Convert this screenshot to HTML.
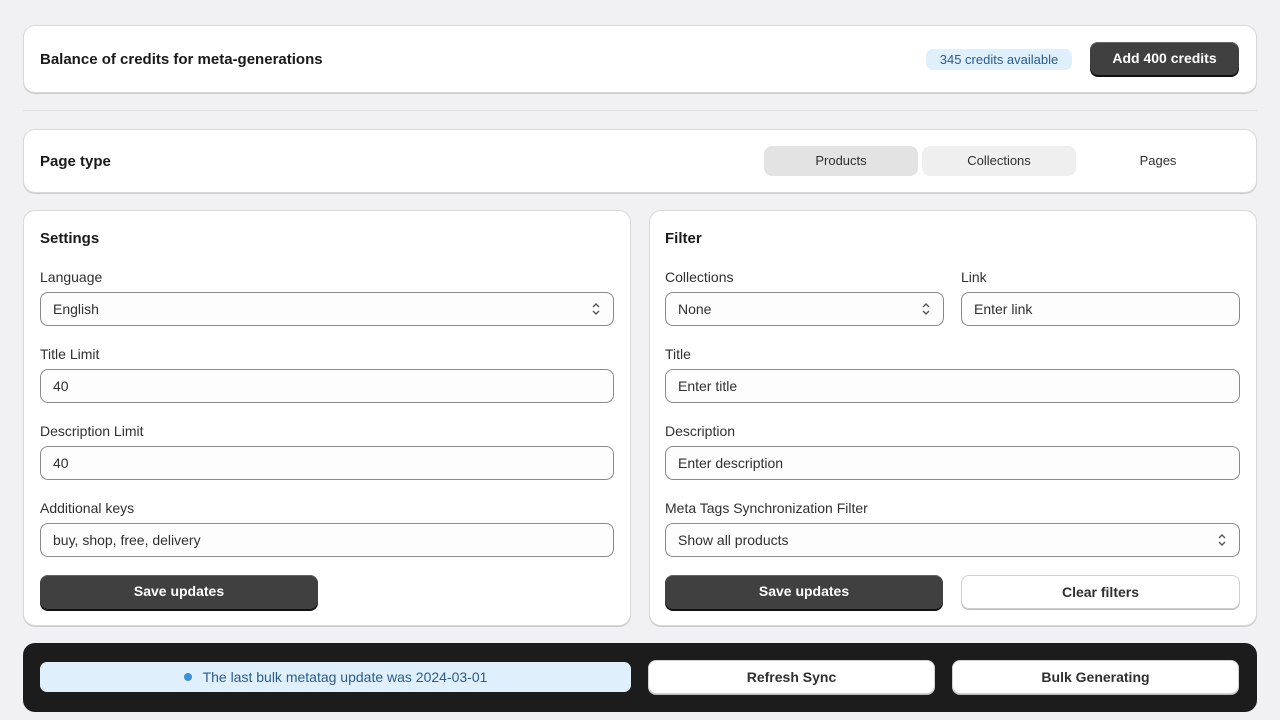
<!DOCTYPE html><html><head><style>
*{box-sizing:border-box;margin:0;padding:0}
body{width:1280px;height:720px;background:#f1f1f3;font-family:"Liberation Sans",sans-serif;color:#303030;position:relative;overflow:hidden}
.a{position:absolute}
.card{position:absolute;background:#fff;border:1px solid #d8d8d8;border-radius:12px;box-shadow:0 1px 0 #ccc}
.h{position:absolute;font-weight:bold;font-size:15px;color:#1a1a1a}
.lbl{position:absolute;font-size:14px;color:#303030}
.inp{position:absolute;height:34px;border:1px solid #8a8a8a;border-radius:8px;background:#fdfdfd;font-size:14px;line-height:32px;padding-left:12px;color:#303030}
.dark{position:absolute;height:34px;background:#404040;border-radius:8px;color:#fff;font-weight:bold;font-size:14px;text-align:center;line-height:33px;box-shadow:0 2px 0 #111,inset 0 1px 0 #666}
.wb{position:absolute;background:#fff;border:1px solid #d0d0d0;border-radius:8px;text-align:center;font-size:14px;font-weight:bold;color:#303030;box-shadow:0 1px 0 #bbb}
.tab{position:absolute;top:146px;height:30px;width:154px;border-radius:8px;text-align:center;line-height:30px;font-size:13px;color:#303030}
.chev{position:absolute;right:12px;top:9px}
</style></head><body>
<div class="card" style="left:23px;top:25px;width:1234px;height:68px"></div>
<div class="h" style="left:40px;top:51px">Balance of credits for meta-generations</div>
<div class="a" style="left:926px;top:49px;width:146px;height:21px;background:#e0effc;border-radius:7px;color:#2c5c8a;font-size:13px;text-align:center;line-height:21px">345 credits available</div>
<div class="dark" style="left:1090px;top:42px;width:149px;height:33px;font-size:14px">Add 400 credits</div>
<div class="a" style="left:23px;top:110px;width:1234px;height:1px;background:#e0e0e0"></div>
<div class="card" style="left:23px;top:129px;width:1234px;height:64px"></div>
<div class="h" style="left:40px;top:153px">Page type</div>
<div class="tab" style="left:764px;background:#e3e3e3">Products</div>
<div class="tab" style="left:922px;background:#efefef">Collections</div>
<div class="tab" style="left:1081px">Pages</div>

<div class="card" style="left:23px;top:210px;width:608px;height:416px"></div>
<div class="h" style="left:40px;top:230px">Settings</div>
<div class="lbl" style="left:40px;top:269px">Language</div>
<div class="inp" style="left:40px;top:292px;width:574px">English<svg class="chev" width="10" height="14" viewBox="0 0 10 14"><path d="M2 5l3-3 3 3M2 9l3 3 3-3" fill="none" stroke="#555" stroke-width="1.4"/></svg></div>
<div class="lbl" style="left:40px;top:346px">Title Limit</div>
<div class="inp" style="left:40px;top:369px;width:574px">40</div>
<div class="lbl" style="left:40px;top:423px">Description Limit</div>
<div class="inp" style="left:40px;top:446px;width:574px">40</div>
<div class="lbl" style="left:40px;top:500px">Additional keys</div>
<div class="inp" style="left:40px;top:523px;width:574px">buy, shop, free, delivery</div>
<div class="dark" style="left:40px;top:575px;width:278px">Save updates</div>

<div class="card" style="left:649px;top:210px;width:608px;height:416px"></div>
<div class="h" style="left:665px;top:230px">Filter</div>
<div class="lbl" style="left:665px;top:269px">Collections</div>
<div class="inp" style="left:665px;top:292px;width:279px">None<svg class="chev" width="10" height="14" viewBox="0 0 10 14"><path d="M2 5l3-3 3 3M2 9l3 3 3-3" fill="none" stroke="#555" stroke-width="1.4"/></svg></div>
<div class="lbl" style="left:961px;top:269px">Link</div>
<div class="inp" style="left:961px;top:292px;width:279px">Enter link</div>
<div class="lbl" style="left:665px;top:346px">Title</div>
<div class="inp" style="left:665px;top:369px;width:575px">Enter title</div>
<div class="lbl" style="left:665px;top:423px">Description</div>
<div class="inp" style="left:665px;top:446px;width:575px">Enter description</div>
<div class="lbl" style="left:665px;top:500px">Meta Tags Synchronization Filter</div>
<div class="inp" style="left:665px;top:523px;width:575px">Show all products<svg class="chev" width="10" height="14" viewBox="0 0 10 14"><path d="M2 5l3-3 3 3M2 9l3 3 3-3" fill="none" stroke="#555" stroke-width="1.4"/></svg></div>
<div class="dark" style="left:665px;top:575px;width:278px">Save updates</div>
<div class="wb" style="left:961px;top:575px;width:279px;height:34px;line-height:32px">Clear filters</div>

<div class="a" style="left:23px;top:643px;width:1234px;height:69px;background:#1c1c1c;border-radius:12px"></div>
<div class="a" style="left:40px;top:662px;width:591px;height:30px;background:#e0effc;border-radius:7px;color:#2c5c8a;font-size:14px;line-height:30px;text-align:center"><span style="display:inline-block;width:8px;height:8px;border-radius:50%;background:#3d8fd6;margin-right:11px;vertical-align:1px"></span>The last bulk metatag update was 2024-03-01</div>
<div class="wb" style="left:648px;top:660px;width:287px;height:34px;line-height:33px;border-radius:8px">Refresh Sync</div>
<div class="wb" style="left:952px;top:660px;width:287px;height:34px;line-height:33px;border-radius:8px">Bulk Generating</div>
</body></html>
